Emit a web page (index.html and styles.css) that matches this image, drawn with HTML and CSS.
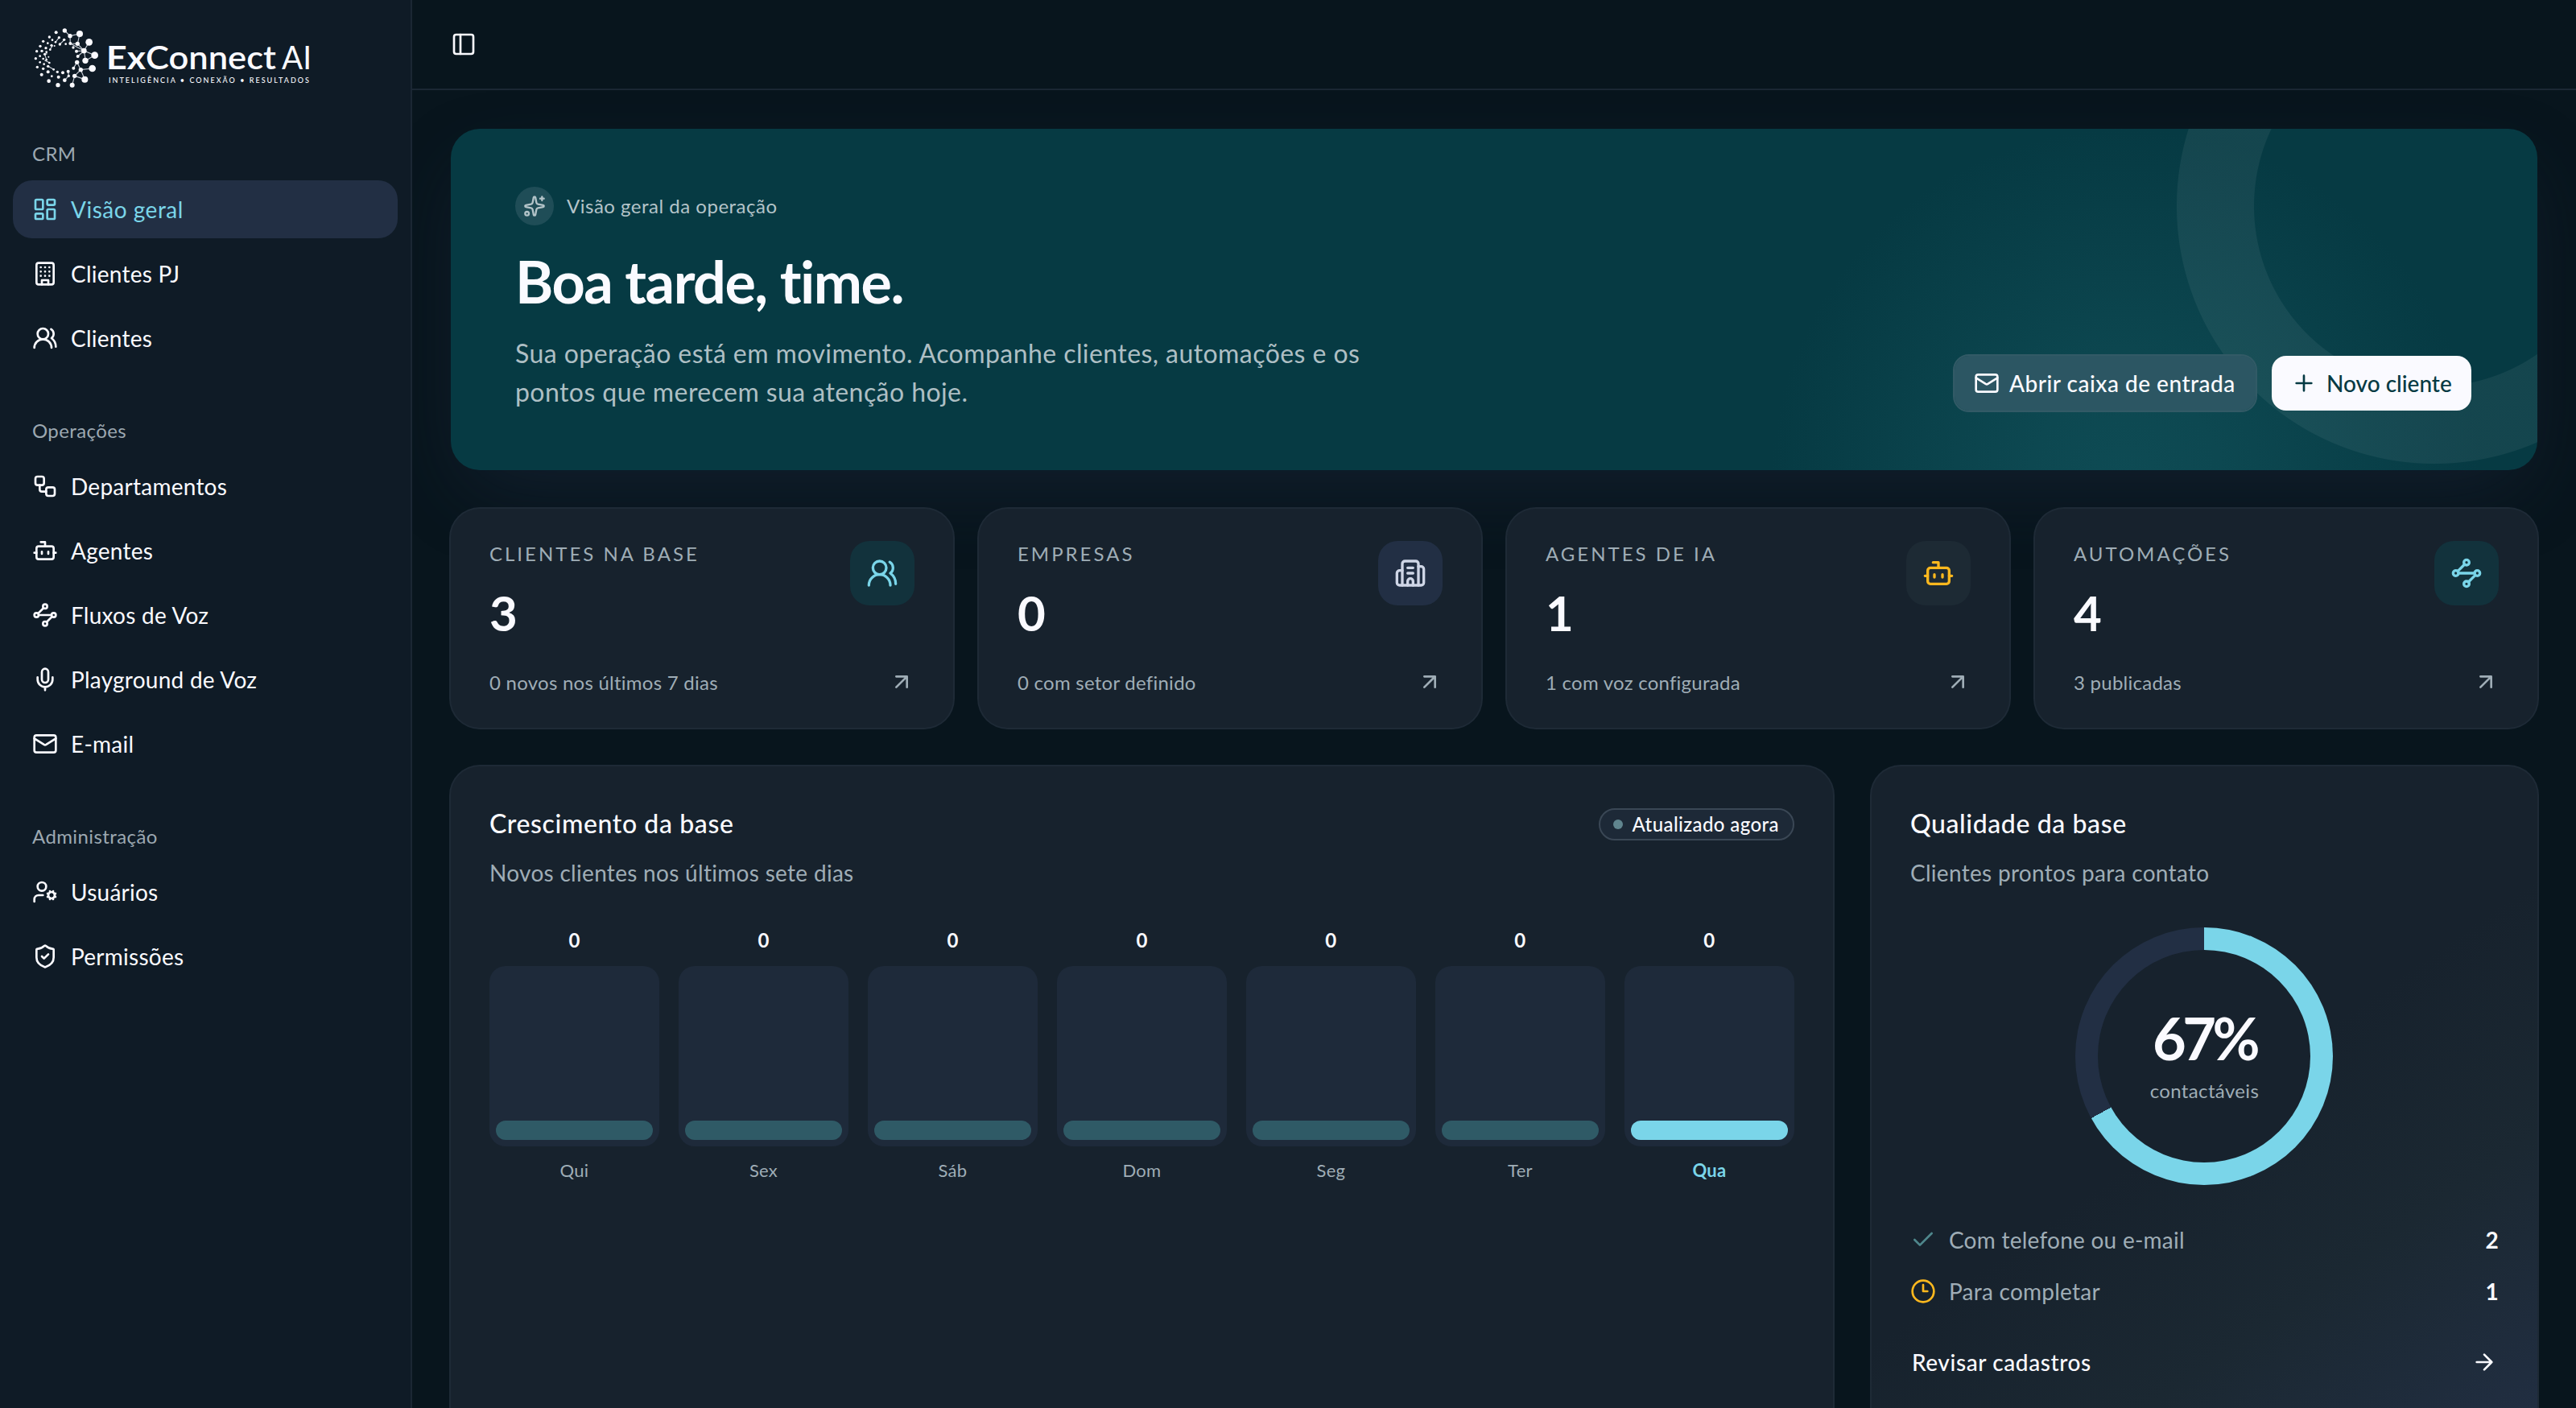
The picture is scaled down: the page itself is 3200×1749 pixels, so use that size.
FILE: index.html
```html
<!DOCTYPE html>
<html lang="pt-BR">
<head>
    <meta charset="UTF-8">
    <meta name="viewport" content="width=device-width, initial-scale=1.0">
    <title>ExConnect AI - Visão geral</title>
    <link rel="stylesheet" href="styles.css">
</head>
<body>
    <!-- Icon sprite -->
    <svg class="sprite" aria-hidden="true">
        <symbol id="i-dashboard" viewBox="0 0 24 24"><rect width="7" height="9" x="3" y="3" rx="1"/><rect width="7" height="5" x="14" y="3" rx="1"/><rect width="7" height="9" x="14" y="12" rx="1"/><rect width="7" height="5" x="3" y="16" rx="1"/></symbol>
        <symbol id="i-building" viewBox="0 0 24 24"><rect width="16" height="20" x="4" y="2" rx="2"/><path d="M9 22v-4h6v4M8 6h.01M16 6h.01M12 6h.01M12 10h.01M12 14h.01M16 10h.01M16 14h.01M8 10h.01M8 14h.01"/></symbol>
        <symbol id="i-users" viewBox="0 0 24 24"><path d="M18 21a8 8 0 0 0-16 0"/><circle cx="10" cy="8" r="5"/><path d="M22 20c0-3.37-2-6.5-4-8a5 5 0 0 0-.45-8.3"/></symbol>
        <symbol id="i-workflow" viewBox="0 0 24 24"><rect width="8" height="8" x="3" y="3" rx="2"/><path d="M7 11v4a2 2 0 0 0 2 2h4"/><rect width="8" height="8" x="13" y="13" rx="2"/></symbol>
        <symbol id="i-bot" viewBox="0 0 24 24"><path d="M12 8V4H8"/><rect width="16" height="12" x="4" y="8" rx="2"/><path d="M2 14h2M20 14h2M15 13v2M9 13v2"/></symbol>
        <symbol id="i-waypoints" viewBox="0 0 24 24"><path d="m10.586 5.414-5.172 5.172M18.586 13.414l-5.172 5.172M6 12h12"/><circle cx="12" cy="20" r="2"/><circle cx="12" cy="4" r="2"/><circle cx="20" cy="12" r="2"/><circle cx="4" cy="12" r="2"/></symbol>
        <symbol id="i-mic" viewBox="0 0 24 24"><path d="M12 19v3M19 10v2a7 7 0 0 1-14 0v-2"/><rect x="9" y="2" width="6" height="13" rx="3"/></symbol>
        <symbol id="i-mail" viewBox="0 0 24 24"><path d="m22 7-8.991 5.727a2 2 0 0 1-2.009 0L2 7"/><rect x="2" y="4" width="20" height="16" rx="2"/></symbol>
        <symbol id="i-user-cog" viewBox="0 0 24 24"><path d="M10 15H6a4 4 0 0 0-4 4v2M14.305 16.53l.923-.382M15.228 13.852l-.923-.383M16.852 12.228l-.383-.923M16.852 17.772l-.383.924M19.148 12.228l.383-.923M19.53 18.696l-.382-.924M20.772 13.852l.924-.383M20.772 16.148l.924.383"/><circle cx="9" cy="7" r="4"/><circle cx="18" cy="15" r="3"/></symbol>
        <symbol id="i-shield" viewBox="0 0 24 24"><path d="M20 13c0 5-3.5 7.5-7.66 8.95a1 1 0 0 1-.67-.01C7.5 20.5 4 18 4 13V6a1 1 0 0 1 1-1c2 0 4.5-1.2 6.24-2.72a1.17 1.17 0 0 1 1.52 0C14.51 3.81 17 5 19 5a1 1 0 0 1 1 1z"/><path d="m9 12 2 2 4-4"/></symbol>
        <symbol id="i-panel" viewBox="0 0 24 24"><rect width="18" height="18" x="3" y="3" rx="2"/><path d="M9 3v18"/></symbol>
        <symbol id="i-sparkles" viewBox="0 0 24 24"><path d="M11.017 2.814a1 1 0 0 1 1.966 0l1.051 5.558a2 2 0 0 0 1.594 1.594l5.558 1.051a1 1 0 0 1 0 1.966l-5.558 1.051a2 2 0 0 0-1.594 1.594l-1.051 5.558a1 1 0 0 1-1.966 0l-1.051-5.558a2 2 0 0 0-1.594-1.594l-5.558-1.051a1 1 0 0 1 0-1.966l5.558-1.051a2 2 0 0 0 1.594-1.594z"/><path d="M20 2v4M22 4h-4"/><circle cx="4" cy="20" r="2"/></symbol>
        <symbol id="i-plus" viewBox="0 0 24 24"><path d="M5 12h14M12 5v14"/></symbol>
        <symbol id="i-office" viewBox="0 0 24 24"><path d="M10 12h4M10 8h4M14 21v-3a2 2 0 0 0-4 0v3"/><path d="M6 10H4a2 2 0 0 0-2 2v7a2 2 0 0 0 2 2h16a2 2 0 0 0 2-2V9a2 2 0 0 0-2-2h-2"/><path d="M6 21V5a2 2 0 0 1 2-2h8a2 2 0 0 1 2 2v16"/></symbol>
        <symbol id="i-arrow-up" viewBox="0 0 24 24"><path d="M7 7h10v10M7 17 17 7"/></symbol>
        <symbol id="i-arrow-right" viewBox="0 0 24 24"><path d="M5 12h14M12 5l7 7-7 7"/></symbol>
        <symbol id="i-check" viewBox="0 0 24 24"><path d="M20 6 9 17l-5-5"/></symbol>
        <symbol id="i-clock" viewBox="0 0 24 24"><circle cx="12" cy="12" r="10"/><path d="M12 6v6h4"/></symbol>
    </svg>

    <div class="layout">
        <aside class="sidebar">
            <a class="brand" href="#">
                <svg width="348" height="78" viewBox="42 33 348 78">
                    <g transform="translate(30 25) scale(.33333)">
                        <path class="brand-links" d="M151 39l20 20 36-8-8 37-27-1-1-28M172 87l51 27-24-26M223 114l-28 2M223 114l19-32M223 114l40 17-34 20-6-37M223 114l-23 21M197 157l14 28 43-5M197 157l-13 22M211 185l-23 23 38 13-15-36M188 208l-9 34M164 191l2 17-15 16M117 82l13-17M133 90l17-17M84 128l-1-10M76 150l18 8M89 172l21 12M76 126l7 20M96 110l10-15"/>
                        <g class="brand-dots">
                            <circle cx="151" cy="39" r="8"/><circle cx="207" cy="51" r="12"/><circle cx="171" cy="59" r="8"/><circle cx="242" cy="82" r="13"/><circle cx="199" cy="88" r="8"/><circle cx="172" cy="87" r="6"/><circle cx="223" cy="114" r="10"/><circle cx="263" cy="131" r="13"/><circle cx="228" cy="151" r="11"/><circle cx="195" cy="116" r="6"/><circle cx="200" cy="135" r="6"/><circle cx="183" cy="102" r="5"/><circle cx="197" cy="157" r="8"/><circle cx="184" cy="179" r="6"/><circle cx="254" cy="180" r="13"/><circle cx="211" cy="185" r="8"/><circle cx="226" cy="221" r="12"/><circle cx="188" cy="208" r="8"/><circle cx="179" cy="242" r="9"/><circle cx="151" cy="224" r="7"/><circle cx="164" cy="191" r="6"/><circle cx="166" cy="208" r="5"/><circle cx="126" cy="242" r="8"/><circle cx="92" cy="227" r="7"/><circle cx="128" cy="212" r="6"/><circle cx="144" cy="196" r="6"/><circle cx="124" cy="193" r="5"/><circle cx="89" cy="193" r="6"/><circle cx="65" cy="203" r="6"/><circle cx="103" cy="209" r="4"/><circle cx="110" cy="184" r="4"/><circle cx="89" cy="172" r="5"/><circle cx="71" cy="181" r="5"/><circle cx="49" cy="175" r="5"/><circle cx="74" cy="164" r="4"/><circle cx="59" cy="157" r="4"/><circle cx="94" cy="159" r="4"/><circle cx="43" cy="143" r="5"/><circle cx="71" cy="144" r="4"/><circle cx="59" cy="134" r="4"/><circle cx="83" cy="148" r="4"/><circle cx="91" cy="137" r="3"/><circle cx="77" cy="127" r="5"/><circle cx="47" cy="116" r="5"/><circle cx="66" cy="115" r="5"/><circle cx="83" cy="119" r="4"/><circle cx="60" cy="97" r="5"/><circle cx="81" cy="104" r="5"/><circle cx="97" cy="110" r="4"/><circle cx="71" cy="79" r="5"/><circle cx="88" cy="86" r="4"/><circle cx="102" cy="94" r="5"/><circle cx="94" cy="63" r="5"/><circle cx="105" cy="74" r="4"/><circle cx="117" cy="82" r="4"/><circle cx="119" cy="46" r="6"/><circle cx="130" cy="65" r="5"/><circle cx="149" cy="73" r="5"/><circle cx="133" cy="90" r="5"/><circle cx="155" cy="89" r="4"/><circle cx="113" cy="96" r="3"/>
                        </g>
                    </g>
                    <text class="brand-ex" x="132" y="85.5" textLength="49" lengthAdjust="spacingAndGlyphs">Ex</text>
                    <text class="brand-connect" x="181" y="85.5" textLength="162" lengthAdjust="spacingAndGlyphs">Connect</text>
                    <text class="brand-ai" x="350" y="85.5" textLength="37" lengthAdjust="spacingAndGlyphs">AI</text>
                    <text class="brand-tag" x="135" y="102.5" textLength="249">INTELIGÊNCIA • CONEXÃO • RESULTADOS</text>
                </svg>
            </a>

            <nav class="nav-group">
                <div class="nav-label">CRM</div>
                <a class="nav-item active" href="#"><svg class="icon"><use href="#i-dashboard"/></svg>Visão geral</a>
                <a class="nav-item" href="#"><svg class="icon"><use href="#i-building"/></svg>Clientes PJ</a>
                <a class="nav-item" href="#"><svg class="icon"><use href="#i-users"/></svg>Clientes</a>
            </nav>
            <nav class="nav-group">
                <div class="nav-label">Operações</div>
                <a class="nav-item" href="#"><svg class="icon"><use href="#i-workflow"/></svg>Departamentos</a>
                <a class="nav-item" href="#"><svg class="icon"><use href="#i-bot"/></svg>Agentes</a>
                <a class="nav-item" href="#"><svg class="icon"><use href="#i-waypoints"/></svg>Fluxos de Voz</a>
                <a class="nav-item" href="#"><svg class="icon"><use href="#i-mic"/></svg>Playground de Voz</a>
                <a class="nav-item" href="#"><svg class="icon"><use href="#i-mail"/></svg>E-mail</a>
            </nav>
            <nav class="nav-group">
                <div class="nav-label">Administração</div>
                <a class="nav-item" href="#"><svg class="icon"><use href="#i-user-cog"/></svg>Usuários</a>
                <a class="nav-item" href="#"><svg class="icon"><use href="#i-shield"/></svg>Permissões</a>
            </nav>
        </aside>

        <main class="main">
            <header class="topbar">
                <svg class="icon"><use href="#i-panel"/></svg>
            </header>

            <div class="content">
                <section class="hero">
                    <div class="hero-text">
                        <div class="eyebrow">
                            <span class="eyebrow-icon"><svg class="icon"><use href="#i-sparkles"/></svg></span>
                            <span class="eyebrow-label">Visão geral da operação</span>
                        </div>
                        <h1>Boa tarde, time.</h1>
                        <p>Sua operação está em movimento. Acompanhe clientes, automações e os pontos que merecem sua atenção hoje.</p>
                    </div>
                    <div class="hero-actions">
                        <button class="btn btn-ghost"><svg class="icon"><use href="#i-mail"/></svg>Abrir caixa de entrada</button>
                        <button class="btn btn-light"><svg class="icon"><use href="#i-plus"/></svg>Novo cliente</button>
                    </div>
                </section>

                <section class="stats">
                    <article class="card stat">
                        <div class="stat-top">
                            <div>
                                <div class="stat-label">CLIENTES NA BASE</div>
                                <div class="stat-value">3</div>
                            </div>
                            <span class="tile tile-teal"><svg class="icon"><use href="#i-users"/></svg></span>
                        </div>
                        <div class="stat-foot">0 novos nos últimos 7 dias<svg class="icon"><use href="#i-arrow-up"/></svg></div>
                    </article>
                    <article class="card stat">
                        <div class="stat-top">
                            <div>
                                <div class="stat-label">EMPRESAS</div>
                                <div class="stat-value">0</div>
                            </div>
                            <span class="tile tile-blue"><svg class="icon"><use href="#i-office"/></svg></span>
                        </div>
                        <div class="stat-foot">0 com setor definido<svg class="icon"><use href="#i-arrow-up"/></svg></div>
                    </article>
                    <article class="card stat">
                        <div class="stat-top">
                            <div>
                                <div class="stat-label">AGENTES DE IA</div>
                                <div class="stat-value">1</div>
                            </div>
                            <span class="tile tile-amber"><svg class="icon"><use href="#i-bot"/></svg></span>
                        </div>
                        <div class="stat-foot">1 com voz configurada<svg class="icon"><use href="#i-arrow-up"/></svg></div>
                    </article>
                    <article class="card stat">
                        <div class="stat-top">
                            <div>
                                <div class="stat-label">AUTOMAÇÕES</div>
                                <div class="stat-value">4</div>
                            </div>
                            <span class="tile tile-teal"><svg class="icon"><use href="#i-waypoints"/></svg></span>
                        </div>
                        <div class="stat-foot">3 publicadas<svg class="icon"><use href="#i-arrow-up"/></svg></div>
                    </article>
                </section>

                <section class="panels">
                    <article class="card panel">
                        <div class="panel-head">
                            <div>
                                <h2>Crescimento da base</h2>
                                <p>Novos clientes nos últimos sete dias</p>
                            </div>
                            <span class="chip"><i></i>Atualizado agora</span>
                        </div>
                        <div class="chart">
                            <div class="col"><b>0</b><div class="track"><div class="bar"></div></div><span>Qui</span></div>
                            <div class="col"><b>0</b><div class="track"><div class="bar"></div></div><span>Sex</span></div>
                            <div class="col"><b>0</b><div class="track"><div class="bar"></div></div><span>Sáb</span></div>
                            <div class="col"><b>0</b><div class="track"><div class="bar"></div></div><span>Dom</span></div>
                            <div class="col"><b>0</b><div class="track"><div class="bar"></div></div><span>Seg</span></div>
                            <div class="col"><b>0</b><div class="track"><div class="bar"></div></div><span>Ter</span></div>
                            <div class="col today"><b>0</b><div class="track"><div class="bar"></div></div><span>Qua</span></div>
                        </div>
                    </article>

                    <article class="card panel quality">
                        <div class="panel-head">
                            <div>
                                <h2>Qualidade da base</h2>
                                <p>Clientes prontos para contato</p>
                            </div>
                        </div>
                        <div class="donut">
                            <div class="donut-hole">
                                <strong>67%</strong>
                                <span>contactáveis</span>
                            </div>
                        </div>
                        <ul class="checks">
                            <li><svg class="icon ok"><use href="#i-check"/></svg>Com telefone ou e-mail<b>2</b></li>
                            <li><svg class="icon wait"><use href="#i-clock"/></svg>Para completar<b>1</b></li>
                        </ul>
                        <a class="review" href="#">Revisar cadastros<svg class="icon"><use href="#i-arrow-right"/></svg></a>
                    </article>
                </section>
            </div>
        </main>
    </div>
</body>
</html>
```
FILE: styles.css
```css
* {
    box-sizing: border-box;
}
body {
    margin: 0;
    background-color: #08151d;
    color: #fafaff;
    font-family: Lato, "Liberation Sans", sans-serif;
    font-size: 28px;
    letter-spacing: 0.25px;
    font-variant-ligatures: none;
}
h1, h2, p, ul {
    margin: 0;
    padding: 0;
}
a {
    color: inherit;
    text-decoration: none;
}
.sprite {
    display: none;
}
.icon {
    width: 32px;
    height: 32px;
    flex: none;
    fill: none;
    stroke: currentColor;
    stroke-width: 2;
    stroke-linecap: round;
    stroke-linejoin: round;
}

.layout {
    display: flex;
    height: 1749px;
    overflow: hidden;
}

/* Sidebar */
.sidebar {
    position: relative;
    z-index: 1;
    width: 512px;
    flex: none;
    padding: 33px 16px 0;
    background-color: #0f1b26;
    border-right: 2px solid #1b2734;
}
.brand {
    display: block;
    height: 127px;
    padding-left: 26px;
}
.brand svg {
    display: block;
}
.brand text {
    fill: #fafaff;
    font-size: 41px;
    letter-spacing: 0;
}
.brand-links {
    fill: none;
    stroke: #c4cbd3;
    stroke-width: 3.5;
}
.brand-dots {
    fill: #fafaff;
}
.brand .brand-ex {
    font-weight: 700;
}
.brand .brand-connect {
    font-weight: 600;
}
.brand .brand-ai {
    font-weight: 400;
}
.brand .brand-tag {
    font-size: 9px;
    font-weight: 500;
}
.nav-group {
    display: flex;
    flex-direction: column;
    gap: 8px;
    margin-bottom: 48px;
}
.nav-label {
    height: 64px;
    margin-bottom: -8px;
    padding-left: 24px;
    color: #9ca8b1;
    font-size: 24px;
    line-height: 62px;
    letter-spacing: 0.4px;
}
.nav-item {
    display: flex;
    align-items: center;
    gap: 16px;
    height: 72px;
    padding: 0 24px;
    border-radius: 24px;
}
.nav-item.active {
    background-color: #222f44;
    color: #7ad5e9;
    letter-spacing: 0.5px;
}

/* Main area */
.main {
    flex: 1;
    min-width: 0;
}
.topbar {
    display: flex;
    align-items: center;
    height: 112px;
    padding: 0 48px;
    border-bottom: 2px solid #1b2734;
}
.content {
    display: flex;
    flex-direction: column;
    gap: 48px;
    padding: 48px;
}

/* Hero */
.hero {
    position: relative;
    display: flex;
    justify-content: space-between;
    align-items: flex-end;
    height: 424px;
    padding: 72px 80px;
    border-radius: 36px;
    background: radial-gradient(circle at 2080px 440px, #0e4b54 0, #0d4851 120px, #063a43 440px) #063a43;
    box-shadow: 0 36px 100px -24px rgba(34, 47, 70, 0.45);
}
.hero::after {
    content: "";
    position: absolute;
    inset: 0;
    border-radius: 36px;
    background: radial-gradient(circle at 2464px 96px, transparent 223.5px, rgba(255, 255, 255, 0.06) 224.5px, rgba(255, 255, 255, 0.06) 319.5px, transparent 320.5px);
}
.hero-text {
    width: 1110px;
    align-self: flex-start;
}
.eyebrow {
    display: flex;
    align-items: center;
    gap: 16px;
    height: 48px;
    color: #b4c4c9;
    font-size: 24px;
    letter-spacing: 0.5px;
}
.eyebrow-label {
    padding-bottom: 2px;
}
.eyebrow-icon {
    display: flex;
    align-items: center;
    justify-content: center;
    width: 48px;
    height: 48px;
    border-radius: 50%;
    background-color: #1f4d57;
}
.eyebrow-icon .icon {
    width: 28px;
    height: 28px;
}
.hero h1 {
    margin: 29px 0 26px;
    font-size: 72px;
    font-weight: 700;
    line-height: 80px;
    letter-spacing: -1.5px;
}
.hero p {
    color: #aebfc4;
    font-size: 32px;
    line-height: 48px;
    letter-spacing: 0.43px;
}
.hero-actions {
    position: relative;
    z-index: 1;
    display: flex;
    gap: 16px;
}
.btn {
    display: flex;
    align-items: center;
    gap: 12px;
    height: 72px;
    padding: 0 24px;
    border: 2px solid transparent;
    border-radius: 20px;
    background-clip: padding-box;
    color: #fafaff;
    font: inherit;
    font-weight: 500;
    letter-spacing: 0.5px;
}
.btn-ghost {
    width: 378px;
    border-color: #325a66;
    background-color: #2c5663;
}
.btn-light {
    width: 252px;
    background-color: #fafaff;
    color: #063a43;
    letter-spacing: 0;
}

/* Cards */
.card {
    border-radius: 36px;
    background-color: #17222d;
    box-shadow: 0 0 0 2px #1e2a36;
}
.stats {
    position: relative;
    display: grid;
    grid-template-columns: repeat(4, 1fr);
    gap: 32px;
}
.stat {
    height: 272px;
    padding: 40px 48px;
}
.stat-top {
    display: flex;
    justify-content: space-between;
    height: 132px;
}
.stat-label {
    color: #9fadb6;
    font-size: 24px;
    line-height: 31px;
    letter-spacing: 3px;
}
.stat-value {
    margin-top: 22px;
    font-size: 60px;
    font-weight: 700;
    line-height: 72px;
}
.tile {
    display: flex;
    align-items: center;
    justify-content: center;
    width: 80px;
    height: 80px;
    border-radius: 24px;
}
.tile .icon {
    width: 40px;
    height: 40px;
}
.tile-teal {
    background-color: #12323c;
    color: #7ad5e9;
}
.tile-blue {
    background-color: #222f44;
    color: #cfd6e6;
}
.tile-amber {
    background-color: #1d2a34;
    color: #fdb81e;
}
.stat-foot {
    display: flex;
    align-items: center;
    justify-content: space-between;
    height: 32px;
    margin-top: 27px;
    color: #9fadb6;
    font-size: 24px;
}

/* Panels */
.panels {
    display: grid;
    grid-template-columns: minmax(0, 2.076fr) minmax(0, 1fr);
    gap: 48px;
}
.panel {
    height: 860px;
    padding: 48px;
}
.panel-head {
    display: flex;
    justify-content: space-between;
    height: 152px;
}
.panel-head h2 {
    font-size: 32px;
    font-weight: 500;
    line-height: 46px;
    letter-spacing: 0.6px;
}
.panel-head p {
    margin-top: 18px;
    color: #9fadb6;
    line-height: 40px;
    letter-spacing: 0.3px;
}
.chip {
    display: flex;
    align-items: center;
    gap: 12px;
    height: 40px;
    margin-top: 4px;
    padding: 0 17px 1px 16px;
    border: 2px solid #3a4755;
    border-radius: 20px;
    background-color: #1d2937;
    font-size: 24px;
    font-weight: 500;
    letter-spacing: 0.4px;
}
.chip i {
    width: 12px;
    height: 12px;
    border-radius: 50%;
    background-color: #60858e;
}
.chart {
    display: grid;
    grid-template-columns: repeat(7, 1fr);
    gap: 24px;
}
.col {
    text-align: center;
}
.col b {
    display: block;
    font-size: 24px;
    font-weight: 700;
    line-height: 32px;
}
.track {
    display: flex;
    align-items: flex-end;
    height: 224px;
    margin: 16px 0;
    padding: 8px;
    border-radius: 20px;
    background-color: #1e2a3a;
}
.bar {
    width: 100%;
    height: 24px;
    border-radius: 12px;
    background-color: #2f5a66;
}
.col span {
    display: block;
    color: #9fadb6;
    font-size: 22px;
    line-height: 28px;
}
.col.today .bar {
    background-color: #7ad5e9;
}
.col.today span {
    color: #7ad5e9;
    font-weight: 700;
}

/* Quality */
.quality {
    background-image: linear-gradient(145deg, #17222d 50%, #1b2832 72%, #222f44 100%);
}
.donut {
    display: flex;
    align-items: center;
    justify-content: center;
    width: 320px;
    height: 320px;
    margin: 0 auto 48px;
    border-radius: 50%;
    background: conic-gradient(#7ad5e9 67%, #222f44 0);
}
.donut-hole {
    display: flex;
    flex-direction: column;
    align-items: center;
    width: 264px;
    height: 264px;
    padding-top: 71px;
    border-radius: 50%;
    background-color: #17222d;
}
.donut strong {
    font-size: 72px;
    font-weight: 700;
    line-height: 76px;
    letter-spacing: -4.5px;
}
.donut span {
    margin-top: 12px;
    color: #9fadb6;
    font-size: 24px;
    line-height: 32px;
    letter-spacing: 0.35px;
}
.checks {
    display: flex;
    flex-direction: column;
    gap: 24px;
    list-style: none;
}
.checks li {
    display: flex;
    align-items: center;
    gap: 16px;
    height: 40px;
    color: #9fadb6;
}
.checks b {
    margin-left: auto;
    color: #fafaff;
    font-weight: 700;
}
.checks .ok {
    color: #4f878c;
}
.checks .wait {
    color: #fdb81e;
}
.review {
    display: flex;
    align-items: center;
    justify-content: space-between;
    height: 72px;
    margin-top: 32px;
    padding: 0 2px;
    font-weight: 500;
    letter-spacing: 0.6px;
}
```
